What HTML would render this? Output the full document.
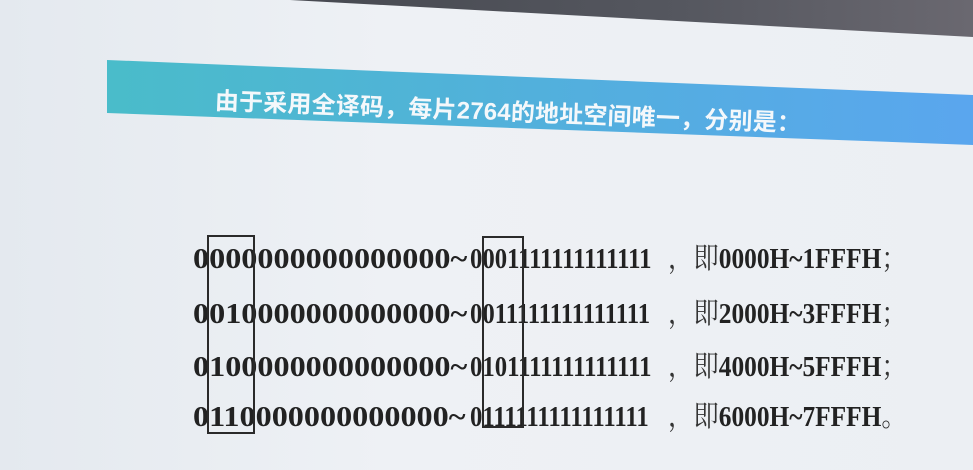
<!DOCTYPE html>
<html><head><meta charset="utf-8"><style>
body{margin:0;width:973px;height:470px;overflow:hidden;background:linear-gradient(90deg,#e4e9ef,#eef1f5 40%,#eceff3);position:relative;font-family:"Liberation Serif","Noto Serif CJK SC",serif}
.dark{position:absolute;left:0;top:0;width:973px;height:40px;background:linear-gradient(90deg,#3c3f46,#55575f 70%,#6a6870);clip-path:polygon(290px 0,973px 0,973px 37px)}
.ban{position:absolute;left:0;top:0;width:973px;height:150px;background:linear-gradient(90deg,#48bfc5,#52b0dc 55%,#5aa6ee);clip-path:polygon(107px 60px,973px 95px,973px 145px,107px 113px)}
.bt{position:absolute;left:215px;top:81px;color:#f4f8fb;font:bold 24px "Liberation Sans","Noto Sans CJK SC",sans-serif;transform:rotate(2.2deg);transform-origin:0 50%;white-space:nowrap;letter-spacing:0.2px}
.p{position:absolute;font-weight:bold;font-size:29px;line-height:34px;height:34px;color:#222;white-space:nowrap;transform-origin:0 50%}
.a{left:193px;transform:scaleX(1.11)}
.b{left:470px;transform:scaleX(0.853)}
.c{left:668px;transform:scaleX(0.875)}
.t{font-weight:normal;color:#333}
.box{position:absolute;border:2px solid #2a2a2a}
</style></head><body>
<div class="dark"></div>
<div class="ban"></div>
<div class="bt">由于采用全译码，每片2764的地址空间唯一，分别是：</div>

<div class="p a" style="top:242px">0000000000000000~</div><div class="p b" style="top:242px">0001111111111111</div><div class="p c" style="top:242px"><span class="t">，即</span>0000H~1FFFH<span class="t">；</span></div>
<div class="p a" style="top:297px">0010000000000000~</div><div class="p b" style="top:297px">0011111111111111</div><div class="p c" style="top:297px"><span class="t">，即</span>2000H~3FFFH<span class="t">；</span></div>
<div class="p a" style="top:350px">0100000000000000~</div><div class="p b" style="top:350px">0101111111111111</div><div class="p c" style="top:350px"><span class="t">，即</span>4000H~5FFFH<span class="t">；</span></div>
<div class="p a" style="top:400px">0110000000000000~</div><div class="p b" style="top:400px">0111111111111111</div><div class="p c" style="top:400px"><span class="t">，即</span>6000H~7FFFH<span class="t">。</span></div>

<div class="box" style="left:207px;top:235px;width:44px;height:195px"></div>
<div class="box" style="left:482px;top:236px;width:38px;height:188px"></div>
</body></html>
